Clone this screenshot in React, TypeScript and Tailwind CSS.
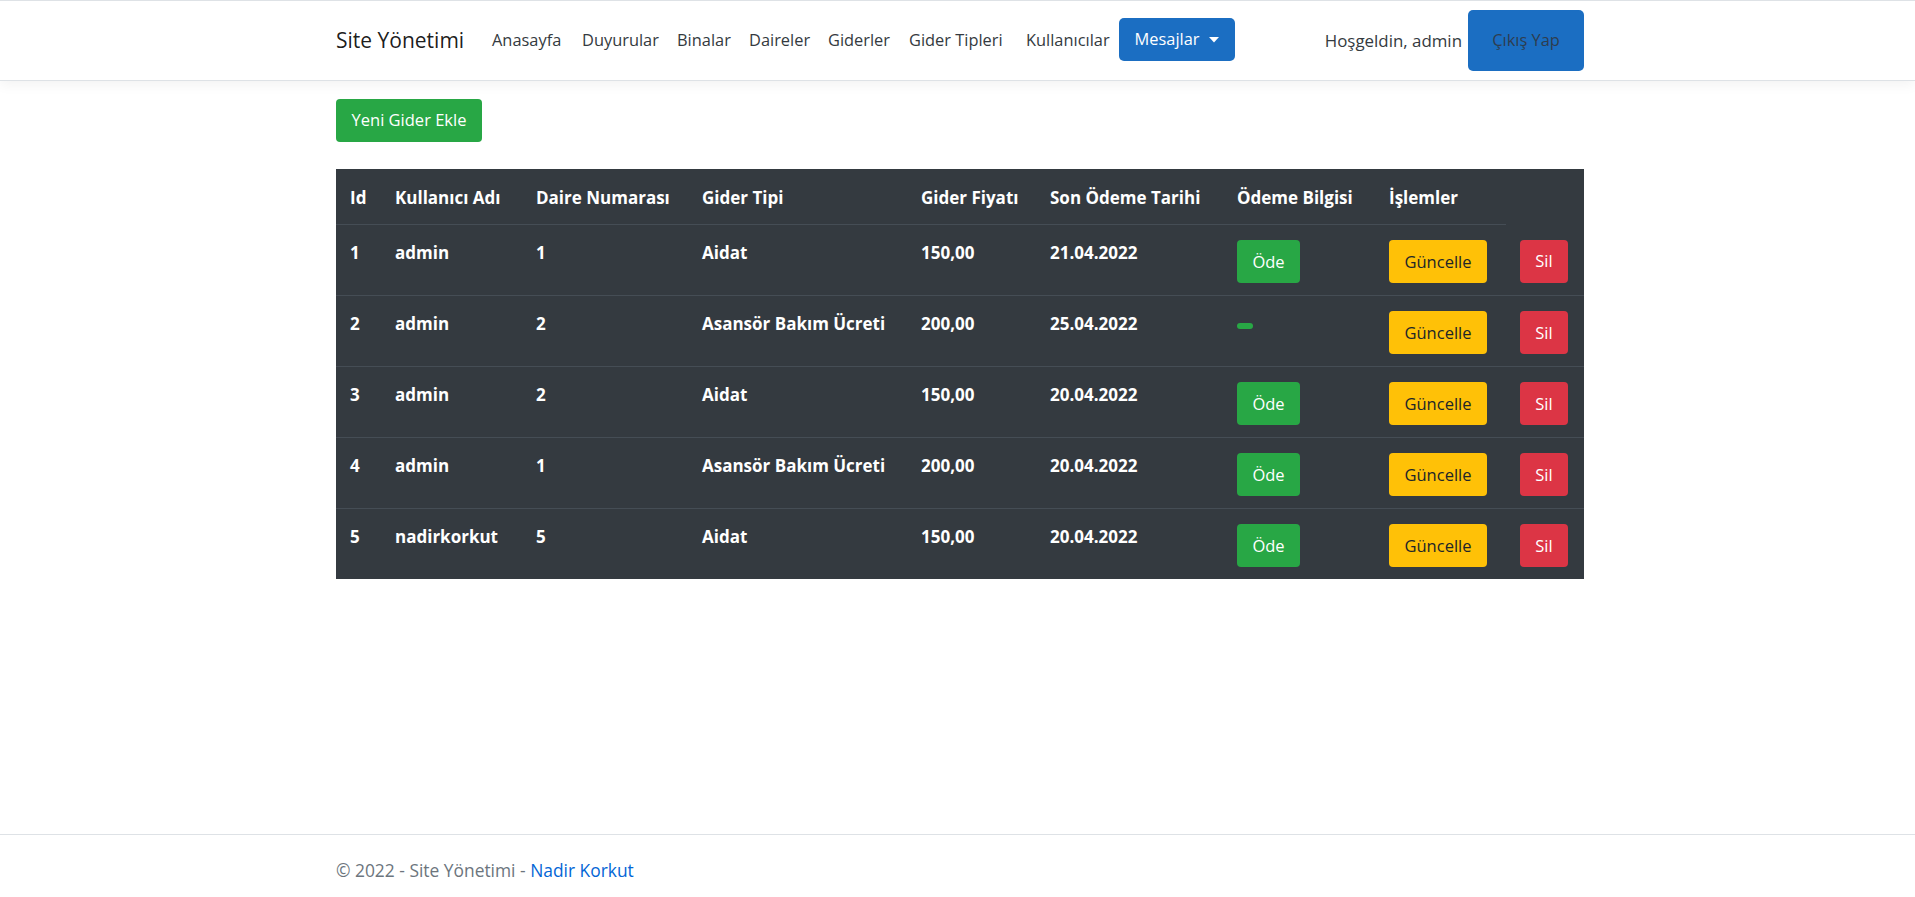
import React from 'react';

type Gider = {
    id: number;
    user: string;
    daire: number;
    tip: string;
    fiyat: string;
    tarih: string;
    odendi: boolean;
};

const giderler: Gider[] = [
    { id: 1, user: 'admin', daire: 1, tip: 'Aidat', fiyat: '150,00', tarih: '21.04.2022', odendi: false },
    { id: 2, user: 'admin', daire: 2, tip: 'Asansör Bakım Ücreti', fiyat: '200,00', tarih: '25.04.2022', odendi: true },
    { id: 3, user: 'admin', daire: 2, tip: 'Aidat', fiyat: '150,00', tarih: '20.04.2022', odendi: false },
    { id: 4, user: 'admin', daire: 1, tip: 'Asansör Bakım Ücreti', fiyat: '200,00', tarih: '20.04.2022', odendi: false },
    { id: 5, user: 'nadirkorkut', daire: 5, tip: 'Aidat', fiyat: '150,00', tarih: '20.04.2022', odendi: false },
];

// link label + slot width so the menu lines up with the original
const links: [string, string][] = [
    ['Anasayfa', 'w-[90px]'],
    ['Duyurular', 'w-[95px]'],
    ['Binalar', 'w-[72px]'],
    ['Daireler', 'w-[79px]'],
    ['Giderler', 'w-[81px]'],
    ['Gider Tipleri', 'w-[117px]'],
    ['Kullanıcılar', 'w-[93px]'],
];

const headers = ['Id', 'Kullanıcı Adı', 'Daire Numarası', 'Gider Tipi', 'Gider Fiyatı', 'Son Ödeme Tarihi', 'Ödeme Bilgisi', 'İşlemler'];

export default function App() {
    return (
        <div className="min-h-screen flex flex-col bg-white text-[#212529] font-['Open_Sans',sans-serif]">
            <header className="h-[81px] border-t border-b border-[#dee2e6] bg-white shadow-[0_4px_12px_rgba(0,0,0,0.05)]">
                <div className="mx-auto w-[1253px] pl-[5px] h-full flex items-center">
                    <a className="text-[21px] text-black/90 w-[156px] leading-none">Site Yönetimi</a>
                    {links.map(([label, w]) => (
                        <a key={label} className={`${w} text-[16.4px] text-[#343a40] leading-none whitespace-nowrap`}>
                            {label}
                        </a>
                    ))}
                    <button className="w-[116px] h-[43px] -mt-[2px] rounded-[5px] bg-[#1b6ec2] text-white text-[16.4px] flex items-center justify-center gap-[10px]">
                        <span>Mesajlar</span>
                        <svg width="10" height="6" viewBox="0 0 10 6">
                            <polygon points="0,0 10,0 5,5.5" fill="white" />
                        </svg>
                    </button>
                    <div className="ml-auto flex items-center">
                        <span className="text-[16.9px] text-[#343a40] mr-[6px] whitespace-nowrap">Hoşgeldin, admin</span>
                        <button className="w-[116px] h-[61px] rounded-[5px] bg-[#1b6ec2] text-[#2e3d4f] text-[16.4px]">
                            Çıkış Yap
                        </button>
                    </div>
                </div>
            </header>

            <main className="flex-1">
                <div className="mx-auto w-[1253px] pl-[5px] pt-[18px]">
                    <button className="w-[146px] h-[43px] rounded-[4px] bg-[#28a745] text-white text-[16.5px]">
                        Yeni Gider Ekle
                    </button>

                    <div className="mt-[27px] w-[1248px] bg-[#343a40]">
                        <table className="w-full table-fixed border-collapse text-white font-bold text-[17px] leading-[26px]">
                            <colgroup>
                                <col className="w-[45px]" />
                                <col className="w-[141px]" />
                                <col className="w-[166px]" />
                                <col className="w-[219px]" />
                                <col className="w-[129px]" />
                                <col className="w-[187px]" />
                                <col className="w-[152px]" />
                                <col className="w-[131px]" />
                                <col className="w-[78px]" />
                            </colgroup>
                            <thead>
                                <tr>
                                    {headers.map((h) => (
                                        <th key={h} className="px-[14px] pt-[16px] pb-[13px] text-left align-top border-b border-[#454d55] whitespace-nowrap">
                                            {h}
                                        </th>
                                    ))}
                                    <th></th>
                                </tr>
                            </thead>
                            <tbody>
                                {giderler.map((g, i) => (
                                    <tr key={g.id} className={i > 0 ? 'border-t border-[#454d55]' : ''}>
                                        <td className="px-[14px] pt-[15px] pb-[12px] align-top">{g.id}</td>
                                        <td className="px-[14px] pt-[15px] pb-[12px] align-top">{g.user}</td>
                                        <td className="px-[14px] pt-[15px] pb-[12px] align-top">{g.daire}</td>
                                        <td className="px-[14px] pt-[15px] pb-[12px] align-top whitespace-nowrap">{g.tip}</td>
                                        <td className="px-[14px] pt-[15px] pb-[12px] align-top">{g.fiyat}</td>
                                        <td className="px-[14px] pt-[15px] pb-[12px] align-top">{g.tarih}</td>
                                        <td className="px-[14px] pt-[15px] pb-[12px] align-top">
                                            {g.odendi ? (
                                                <div className="mt-[12px] w-[16px] h-[6px] rounded-full bg-[#28a745]" />
                                            ) : (
                                                <button className="w-[63px] h-[43px] rounded-[4px] bg-[#28a745] text-white font-normal text-[16.5px]">
                                                    Öde
                                                </button>
                                            )}
                                        </td>
                                        <td className="px-[14px] pt-[15px] pb-[12px] align-top">
                                            <button className="w-[98px] h-[43px] rounded-[4px] bg-[#ffc107] text-[#212529] font-normal text-[16.5px]">
                                                Güncelle
                                            </button>
                                        </td>
                                        <td className="pl-[14px] pr-[16px] pt-[15px] pb-[12px] align-top">
                                            <button className="w-[48px] h-[43px] rounded-[4px] bg-[#dc3545] text-white font-normal text-[16.5px]">
                                                Sil
                                            </button>
                                        </td>
                                    </tr>
                                ))}
                            </tbody>
                        </table>
                    </div>
                </div>
            </main>

            <footer className="h-[63px] border-t border-[#dee2e6] pt-[8px] flex items-center">
                <div className="mx-auto w-[1253px] pl-[5px] text-[17.4px] text-[#6c757d] whitespace-nowrap">
                    © 2022 - Site Yönetimi - <a className="text-[#0366d6]">Nadir Korkut</a>
                </div>
            </footer>
        </div>
    );
}
